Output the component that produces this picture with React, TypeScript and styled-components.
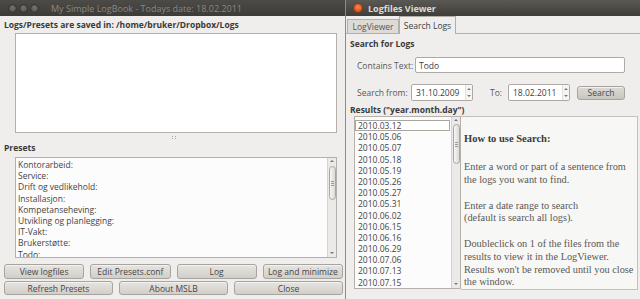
import React from "react";
import styled, { createGlobalStyle } from "styled-components";

const GlobalStyle = createGlobalStyle`
  html, body { margin: 0; padding: 0; width: 640px; height: 299px; overflow: hidden; background: #3c3b37; }
  #root { width: 640px; height: 299px; }
  * { box-sizing: border-box; }
`;

const UI = `"Open Sans", "Noto Sans", sans-serif`;

const Desktop = styled.div`
  display: flex;
  width: 640px;
  height: 299px;
  font-family: ${UI};
  font-size: 8.5px;
  color: #3c3c3c;
`;

const Window = styled.div<{ $w?: number; $right?: boolean }>`
  display: flex;
  flex-direction: column;
  background: #efeeec;
  overflow: hidden;
  ${(p) => (p.$w ? `width:${p.$w}px; flex:none;` : `flex:1; min-width:0;`)}
  ${(p) => (p.$right ? `border-left:1px solid #8e8b85;` : ``)}
`;

const TitleBar = styled.div<{ $active?: boolean }>`
  height: 16px;
  flex: none;
  display: flex;
  align-items: center;
  padding-left: ${(p) => (p.$active ? 7 : 8)}px;
  background: ${(p) =>
    p.$active ? "linear-gradient(#5a5954, #3e3d39)" : "linear-gradient(#4c4b47, #3c3b37)"};
`;

const WinBtns = styled.div`
  display: flex;
  gap: 2px;
`;

const WinBtn = styled.span<{ $close?: boolean }>`
  width: ${(p) => (p.$close ? 10 : 9)}px;
  height: ${(p) => (p.$close ? 10 : 9)}px;
  border-radius: 50%;
  background: ${(p) =>
    p.$close
      ? "radial-gradient(circle at 50% 40%, #f58a5a, #d9501e 70%)"
      : "radial-gradient(circle at 50% 40%, #77766f, #55544f 70%)"};
  border: 1px solid ${(p) => (p.$close ? "#8a3a16" : "#35342f")};
`;

const TitleText = styled.span<{ $active?: boolean }>`
  margin-left: ${(p) => (p.$active ? 5 : 12)}px;
  font-size: 9px;
  font-weight: ${(p) => (p.$active ? 700 : 400)};
  color: ${(p) => (p.$active ? "#dfdbd2" : "#8b8880")};
  white-space: nowrap;
`;

/* ---------- left window ---------- */

const LeftBody = styled.div`
  display: flex;
  flex-direction: column;
  padding: 1px 2px 0 4px;
`;

const SectionLabel = styled.div<{ $h: number }>`
  height: ${(p) => p.$h}px;
  line-height: ${(p) => p.$h}px;
  font-weight: 700;
  color: #3a3a3a;
  white-space: nowrap;
`;

const LogArea = styled.div`
  margin: 1px 0 0 11px;
  width: 322px;
  height: 100px;
  background: #ffffff;
  border: 1px solid #b5b1aa;
`;

const Splitter = styled.div`
  height: 9px;
  display: flex;
  align-items: center;
  justify-content: center;
`;

const Grip = styled.span`
  width: 4px;
  height: 3px;
  border-left: 1px dotted #a9a6a0;
  border-right: 1px dotted #a9a6a0;
`;

const ListBox = styled.div<{ $w?: number; $h: number; $ml: number }>`
  margin-left: ${(p) => p.$ml}px;
  ${(p) => (p.$w ? `width:${p.$w}px; flex:none;` : ``)}
  height: ${(p) => p.$h}px;
  display: flex;
  background: #fcfcfc;
  border: 1px solid #b5b1aa;
  overflow: hidden;
`;

const Items = styled.div<{ $pt: number; $pl: number }>`
  flex: 1;
  min-width: 0;
  padding: ${(p) => p.$pt}px 0 0 ${(p) => p.$pl}px;
  display: flex;
  flex-direction: column;
`;

const Item = styled.div<{ $focus?: boolean }>`
  height: 11.2px;
  line-height: 11.2px;
  white-space: nowrap;
  color: #444;
  ${(p) =>
    p.$focus
      ? `background:#ffffff; outline:1px solid #a9a6a0; outline-offset:-1px; margin:0 1px 0 -3px; padding-left:3px;`
      : ``}
`;

const ScrollTrack = styled.div`
  flex: none;
  width: 9px;
  display: flex;
  flex-direction: column;
  align-items: center;
  background: #ebeae8;
  border-left: 1px solid #d6d3ce;
  padding: 2px 0 3px;
`;

const ScrollArrow = styled.div<{ $down?: boolean }>`
  width: 0;
  height: 0;
  border-left: 2px solid transparent;
  border-right: 2px solid transparent;
  ${(p) => (p.$down ? "border-top: 2px solid #7a7874;" : "border-bottom: 2px solid #7a7874;")}
`;

const ScrollThumb = styled.div<{ $h: number; $mt: number }>`
  width: 7px;
  height: ${(p) => p.$h}px;
  margin-top: ${(p) => p.$mt}px;
  border: 1px solid #a9a6a0;
  border-radius: 4px;
  background: linear-gradient(90deg, #f7f6f5, #dcdad6);
  display: flex;
  align-items: center;
  justify-content: center;
  &::after {
    content: "";
    width: 3px;
    height: 5px;
    background: repeating-linear-gradient(#9d9a94 0 1px, transparent 1px 2px);
  }
`;

const Spacer = styled.div`
  flex: 1;
`;

const ButtonGrid = styled.div<{ $cols: number; $mt: number; $h: number }>`
  display: grid;
  grid-template-columns: repeat(${(p) => p.$cols}, 1fr);
  column-gap: 6px;
  margin-top: ${(p) => p.$mt}px;
  height: ${(p) => p.$h}px;
`;

const Button = styled.div<{ $w?: number }>`
  ${(p) => (p.$w ? `width:${p.$w}px; flex:none;` : ``)}
  display: flex;
  align-items: center;
  justify-content: center;
  border: 1px solid #a7a39d;
  border-radius: 3px;
  background: linear-gradient(#e6e4e1, #d2cfca);
  color: #454545;
  white-space: nowrap;
  box-shadow: inset 0 1px 0 #f3f2f0;
`;

/* ---------- right window ---------- */

const TabBar = styled.div`
  height: 18px;
  flex: none;
  display: flex;
  align-items: flex-end;
  padding-left: 1px;
  border-bottom: 1px solid #b3afa8;
`;

const Tab = styled.div<{ $active?: boolean; $w: number }>`
  width: ${(p) => p.$w}px;
  height: ${(p) => (p.$active ? 18 : 14)}px;
  margin-bottom: ${(p) => (p.$active ? -1 : 0)}px;
  display: flex;
  align-items: center;
  justify-content: center;
  border: 1px solid #b3afa8;
  border-bottom: none;
  background: ${(p) => (p.$active ? "#efeeec" : "#dedbd6")};
  color: ${(p) => (p.$active ? "#3c3c3c" : "#555")};
  white-space: nowrap;
`;

const Panel = styled.div`
  display: flex;
  flex-direction: column;
  padding-left: 4px;
`;

const FormRow = styled.div<{ $mt: number; $h: number }>`
  display: flex;
  align-items: center;
  margin: ${(p) => p.$mt}px 0 0 7px;
  height: ${(p) => p.$h}px;
`;

const FieldLabel = styled.span<{ $w: number; $ml?: number }>`
  width: ${(p) => p.$w}px;
  margin-left: ${(p) => p.$ml || 0}px;
  flex: none;
  color: #585858;
  white-space: nowrap;
`;

const TextInput = styled.div<{ $w: number }>`
  width: ${(p) => p.$w}px;
  height: 100%;
  display: flex;
  align-items: center;
  padding-left: 3px;
  background: #ffffff;
  border: 1px solid #aeaaa3;
  border-radius: 2px;
  color: #3c3c3c;
`;

const SpinBox = styled.div<{ $w: number }>`
  width: ${(p) => p.$w}px;
  height: 100%;
  display: flex;
  background: #ffffff;
  border: 1px solid #aeaaa3;
  border-radius: 2px;
`;

const SpinText = styled.span`
  flex: 1;
  display: flex;
  align-items: center;
  padding-left: 4px;
  color: #3c3c3c;
`;

const SpinArrows = styled.span`
  width: 7px;
  display: flex;
  flex-direction: column;
  align-items: center;
  justify-content: space-between;
  padding: 3px 0;
  border-left: 1px solid #e2e0dc;
  background: #f6f5f4;
`;

const SearchButton = styled(Button)`
  margin-left: 7px;
  height: 14px;
  background: linear-gradient(#dcdad6, #c9c6c1);
  color: #4a4a4a;
`;

const ResultsArea = styled.div`
  display: flex;
  height: 174px;
  margin-right: 2px;
`;

const HelpPane = styled.div`
  flex: 1;
  min-width: 0;
  background: #f7f7f6;
  border: 1px solid #c4c1bb;
  border-left: none;
  padding: 15px 2px 0 3px;
  font-family: "Liberation Serif", "Times New Roman", serif;
  color: #5a5855;
  font-size: 10.3px;
  overflow: hidden;
`;

const HelpHeading = styled.div`
  font-weight: 700;
  font-size: 10.5px;
  line-height: 13px;
  margin-bottom: 16px;
  color: #3c3b39;
`;

const HelpPara = styled.p`
  margin: 0 0 13.5px;
  line-height: 12.6px;
  white-space: nowrap;
`;

const presets = [
  "Kontorarbeid:",
  "Service:",
  "Drift og vedlikehold:",
  "Installasjon:",
  "Kompetanseheving:",
  "Utvikling og planlegging:",
  "IT-Vakt:",
  "Brukerstøtte:",
  "Todo:",
];

const results = [
  "2010.03.12",
  "2010.05.06",
  "2010.05.07",
  "2010.05.18",
  "2010.05.19",
  "2010.05.26",
  "2010.05.27",
  "2010.05.31",
  "2010.06.02",
  "2010.06.15",
  "2010.06.16",
  "2010.06.29",
  "2010.07.06",
  "2010.07.13",
  "2010.07.15",
];

function Scrollbar({ thumbTop, thumbH }: { thumbTop: number; thumbH: number }) {
  return (
    <ScrollTrack>
      <ScrollArrow />
      <ScrollThumb $mt={thumbTop} $h={thumbH} />
      <Spacer />
      <ScrollArrow $down />
    </ScrollTrack>
  );
}

export default function App() {
  return (
    <>
      <GlobalStyle />
      <Desktop>
        <Window $w={345}>
          <TitleBar>
            <WinBtns>
              <WinBtn />
              <WinBtn />
              <WinBtn />
            </WinBtns>
            <TitleText>My Simple LogBook - Todays date: 18.02.2011</TitleText>
          </TitleBar>
          <LeftBody>
            <SectionLabel $h={15}>Logs/Presets are saved in: /home/bruker/Dropbox/Logs</SectionLabel>
            <LogArea />
            <Splitter>
              <Grip />
            </Splitter>
            <SectionLabel $h={12}>Presets</SectionLabel>
            <ListBox $ml={11} $w={322} $h={101} style={{ marginTop: 3 }}>
              <Items $pt={1} $pl={2}>
                {presets.map((p) => (
                  <Item key={p}>{p}</Item>
                ))}
              </Items>
              <Scrollbar thumbTop={4} thumbH={34} />
            </ListBox>
            <ButtonGrid $cols={4} $mt={6} $h={15}>
              <Button>View logfiles</Button>
              <Button>Edit Presets.conf</Button>
              <Button>Log</Button>
              <Button>Log and minimize</Button>
            </ButtonGrid>
            <ButtonGrid $cols={3} $mt={2} $h={14}>
              <Button>Refresh Presets</Button>
              <Button>About MSLB</Button>
              <Button>Close</Button>
            </ButtonGrid>
          </LeftBody>
        </Window>

        <Window $right>
          <TitleBar $active>
            <WinBtn $close />
            <TitleText $active>Logfiles Viewer</TitleText>
          </TitleBar>
          <TabBar>
            <Tab $w={52}>LogViewer</Tab>
            <Tab $w={57} $active>
              Search Logs
            </Tab>
          </TabBar>
          <Panel>
            <SectionLabel $h={14} style={{ marginTop: 3 }}>
              Search for Logs
            </SectionLabel>
            <FormRow $mt={6} $h={16}>
              <FieldLabel $w={58}>Contains Text:</FieldLabel>
              <TextInput $w={210}>Todo</TextInput>
            </FormRow>
            <FormRow $mt={11} $h={17}>
              <FieldLabel $w={54}>Search from:</FieldLabel>
              <SpinBox $w={62}>
                <SpinText>31.10.2009</SpinText>
                <SpinArrows>
                  <ScrollArrow />
                  <ScrollArrow $down />
                </SpinArrows>
              </SpinBox>
              <FieldLabel $w={18} $ml={17}>
                To:
              </FieldLabel>
              <SpinBox $w={62}>
                <SpinText>18.02.2011</SpinText>
                <SpinArrows>
                  <ScrollArrow />
                  <ScrollArrow $down />
                </SpinArrows>
              </SpinBox>
              <SearchButton $w={48}>Search</SearchButton>
            </FormRow>
            <SectionLabel $h={13} style={{ marginTop: 2 }}>
              Results ("year.month.day")
            </SectionLabel>
            <ResultsArea>
              <ListBox $ml={4} $w={107} $h={173}>
                <Items $pt={3} $pl={3}>
                  {results.map((r, i) => (
                    <Item key={r} $focus={i === 0}>
                      {r}
                    </Item>
                  ))}
                </Items>
                <Scrollbar thumbTop={3} thumbH={40} />
              </ListBox>
              <HelpPane>
                <HelpHeading>How to use Search:</HelpHeading>
                <HelpPara>
                  Enter a word or part of a sentence from
                  <br />
                  the logs you want to find.
                </HelpPara>
                <HelpPara>
                  Enter a date range to search
                  <br />
                  (default is search all logs).
                </HelpPara>
                <HelpPara>
                  Doubleclick on 1 of the files from the
                  <br />
                  results to view it in the LogViewer.
                  <br />
                  Results won't be removed until you close
                  <br />
                  the window.
                </HelpPara>
              </HelpPane>
            </ResultsArea>
          </Panel>
        </Window>
      </Desktop>
    </>
  );
}
